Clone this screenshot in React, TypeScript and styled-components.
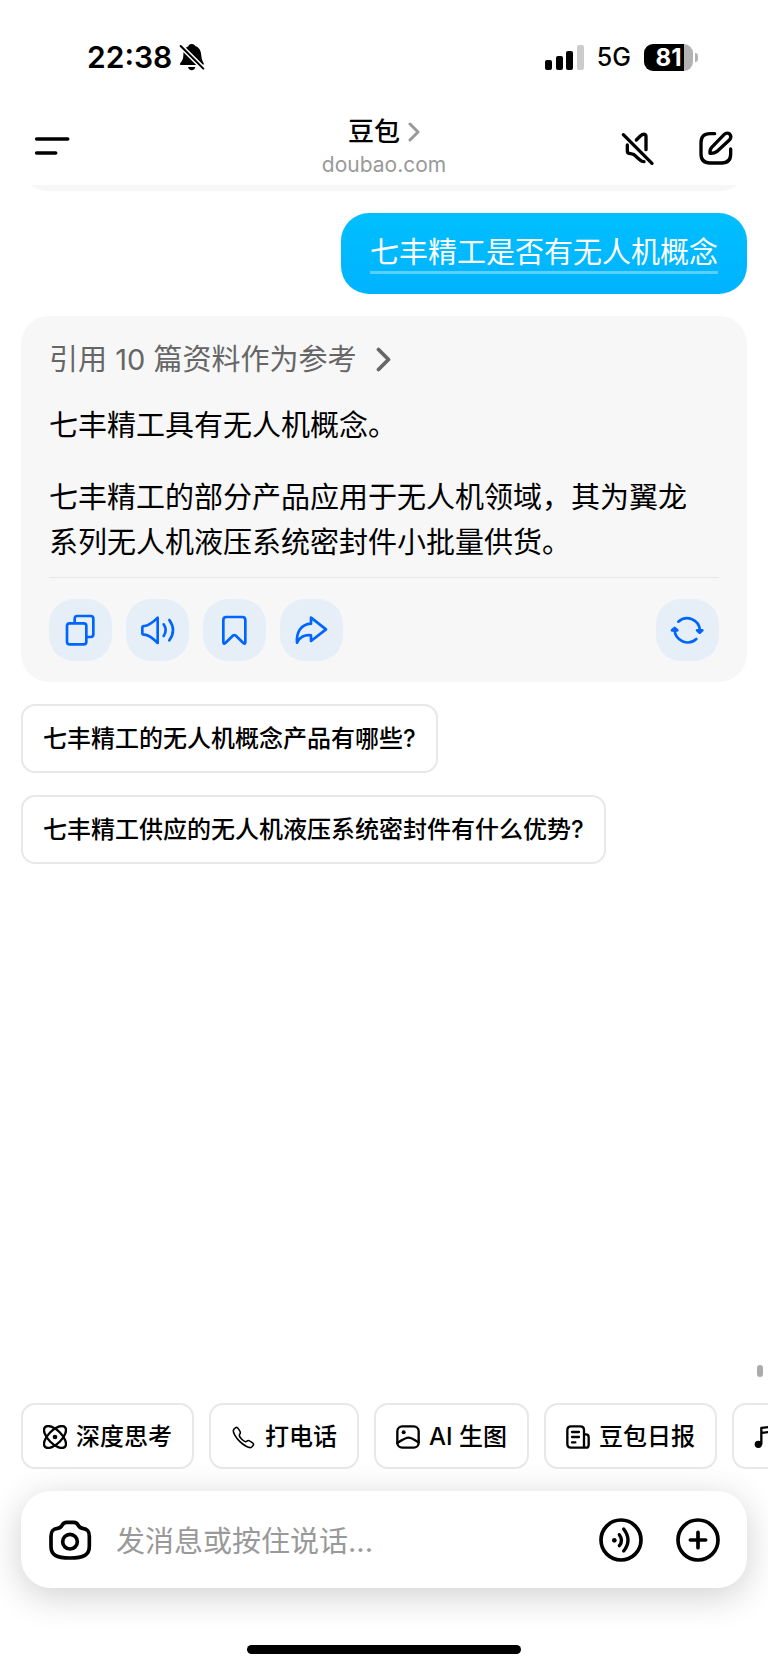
import React from "react";
import styled, { createGlobalStyle } from "styled-components";
import { IoCallOutline } from "react-icons/io5";

const GlobalStyle = createGlobalStyle`
  *, *::before, *::after { box-sizing: border-box; }
  body {
    margin: 0;
    background: #fff;
    color: #000;
    font-family: Inter, "Noto Sans CJK SC", sans-serif;
  }
  button, input { font: inherit; color: inherit; }
  button { margin: 0; padding: 0; border: 0; background: none; cursor: pointer; }
  p, h1 { margin: 0; }
  svg { display: block; flex: none; }
`;

const Screen = styled.div`
  display: flex;
  flex-direction: column;
  min-height: 100vh;
  overflow: hidden;
`;

const StatusBar = styled.div`
  display: flex;
  align-items: center;
  justify-content: space-between;
  height: 114px;
  padding: 0 70px 0 87px;
`;

const StatusGroup = styled.div<{ $gap: number }>`
  display: flex;
  align-items: center;
  gap: ${(p) => p.$gap}px;
`;

const Clock = styled.time`
  font-size: 30px;
  font-weight: 600;
  line-height: 36px;
`;

const Network = styled.span`
  font-size: 25px;
  font-weight: 500;
  line-height: 30px;
`;

const Battery = styled.div`
  display: flex;
  align-items: center;
  gap: 2px;
  &::after {
    content: "";
    width: 3px;
    height: 9px;
    border-radius: 0 4px 4px 0;
    background: #b3b3b3;
  }
`;

const BatteryLevel = styled.span`
  width: 49px;
  border-radius: 9px;
  background: linear-gradient(to right, #000 81%, #b3b3b3 81%);
  color: #fff;
  font-size: 24px;
  font-weight: 700;
  line-height: 27px;
  text-align: center;
`;

const NavBar = styled.header`
  display: grid;
  grid-template-columns: 1fr auto 1fr;
  align-items: center;
  height: 71px;
  padding: 0 32px 4px;
`;

const NavActions = styled.div`
  display: flex;
  justify-content: flex-end;
  gap: 38px;
`;

const TitleBlock = styled.div`
  display: flex;
  flex-direction: column;
  align-items: center;
`;

const Title = styled.h1`
  display: flex;
  align-items: center;
  gap: 8px;
  font-size: 26px;
  font-weight: 500;
  line-height: 34px;
`;

const Subtitle = styled.p`
  color: #999;
  font-size: 21px;
  line-height: 32px;
`;

const Conversation = styled.main`
  position: relative;
  display: flex;
  flex: 1;
  flex-direction: column;
  align-items: flex-start;
  gap: 22px;
  overflow: hidden;
  padding: 0 21px 22px;
`;

const EarlierReply = styled.div`
  align-self: stretch;
  height: 51px;
  margin-top: -45px;
  border-radius: 28px;
  background: #f7f7f7;
`;

const UserBubble = styled.div`
  align-self: flex-end;
  padding: 21px 29px 20px;
  border-radius: 28px;
  background: linear-gradient(#00bfff, #00b3ff);
`;

const QueryLink = styled.a`
  display: block;
  border-bottom: 3px solid rgba(255, 255, 255, 0.35);
  color: #fff;
  font-size: 29px;
  font-weight: 400;
  line-height: 37px;
  text-decoration: none;
`;

const ReplyCard = styled.article`
  align-self: stretch;
  padding: 21px 28px;
  border-radius: 28px;
  background: #f7f7f7;
  font-size: 29px;
  line-height: 45px;
`;

const SourcesButton = styled.button`
  display: flex;
  align-items: center;
  gap: 20px;
  color: #666;
`;

const Paragraph = styled.p<{ $gap: number }>`
  margin-top: ${(p) => p.$gap}px;
  padding-right: 12px;
`;

const ReplyToolbar = styled.div`
  display: flex;
  gap: 14px;
  margin-top: 12px;
  padding-top: 21px;
  border-top: 1px solid #e6e6e6;
`;

const ToolButton = styled.button<{ $end?: boolean }>`
  display: grid;
  place-items: center;
  width: 63px;
  height: 62px;
  margin-left: ${(p) => (p.$end ? "auto" : "0")};
  border-radius: 25px;
  background: #e6eff8;
  color: #0065fd;
`;

const Suggestion = styled.button`
  height: 69px;
  padding: 0 20px;
  border: 2px solid #e8e8e8;
  border-radius: 14px;
  font-size: 24px;
  font-weight: 500;
  line-height: 36px;
`;

const ScrollThumb = styled.div`
  position: absolute;
  right: 5px;
  bottom: 26px;
  width: 6px;
  height: 12px;
  border-radius: 3px;
  background: #aaa;
`;

const Shortcuts = styled.nav`
  display: flex;
  gap: 15px;
  overflow: hidden;
  padding: 0 0 22px 21px;
`;

const Shortcut = styled.button`
  display: flex;
  flex: none;
  align-items: center;
  gap: 9px;
  height: 66px;
  padding: 2px 20px 0;
  border: 2px solid #e8e8e8;
  border-radius: 14px;
  font-size: 24px;
  font-weight: 500;
  line-height: 36px;
`;

const Composer = styled.form`
  display: flex;
  align-items: center;
  gap: 33px;
  height: 97px;
  margin: 0 21px;
  padding: 0 27px;
  border-radius: 30px;
  background: #fff;
  box-shadow: 0 8px 36px rgba(0, 0, 0, 0.19);
`;

const MessageInput = styled.input`
  flex: 1;
  min-width: 0;
  margin-left: -9px;
  padding: 5px 0 0;
  border: 0;
  outline: 0;
  background: none;
  font-size: 29px;
  line-height: 40px;
  &::placeholder { color: #999; opacity: 1; }
`;

const HomeIndicator = styled.div`
  align-self: center;
  width: 274px;
  height: 9px;
  margin: 57px 0 15px;
  border-radius: 5px;
  background: #000;
`;

type IconProps = {
  width: number;
  height: number;
  stroke?: number;
  children: React.ReactNode;
};

/* Icons are drawn on a grid three times finer than their display size. */
const Icon = ({ width, height, stroke = 10, children }: IconProps) => (
  <svg
    width={width}
    height={height}
    viewBox={`0 0 ${width * 3} ${height * 3}`}
    fill="none"
    stroke="currentColor"
    strokeWidth={stroke}
    strokeLinecap="round"
    strokeLinejoin="round"
    aria-hidden="true"
  >
    {children}
  </svg>
);

const BellOff = () => (
  <Icon width={26} height={28} stroke={6}>
    <g fill="currentColor" stroke="none">
      <path d="M38 3C46 3 48 8 50 10C62 14 66 25 67 38C68 50 71 54 74 60Q76 66 71 66H7Q1 66 4 60C10 52 13 48 13 36C13 22 18 14 28 10C29 7 31 3 38 3Z" />
      <path d="M27 72H49Q46 82 38 82T27 72Z" />
    </g>
    <path d="M2 6L78 82" stroke="#fff" strokeWidth={15} />
    <path d="M5 9L73 77" />
  </Icon>
);

const Signal = () => (
  <svg width="39" height="25" viewBox="0 0 39 25" fill="currentColor" aria-hidden="true">
    <rect x="0" y="15" width="7" height="10" rx="2" />
    <rect x="11" y="11" width="7" height="14" rx="2" />
    <rect x="21" y="6" width="7" height="19" rx="2" />
    <rect x="32" y="0" width="7" height="25" rx="2" fill="#ccc" />
  </svg>
);

const MenuIcon = () => (
  <Icon width={40} height={40} stroke={11}>
    <path d="M14 39H107M14 81H71" />
  </Icon>
);

const MuteIcon = () => (
  <Icon width={40} height={40}>
    <path d="M16 20L102 106" />
    <path d="M55 36L67 24Q74 18 80 19Q84 20 84 26V65" />
    <path d="M28 51V70Q28 77 38 77Q48 78 55 86L66 96Q71 101 78 101" />
  </Icon>
);

const ComposeIcon = () => (
  <Icon width={40} height={40}>
    <path d="M56 17H42Q15 17 15 44V78Q15 105 42 105H77Q104 105 104 78V63" />
    <path d="M42 76Q41 64 47 58L84 20Q92 12 101 18Q108 26 101 35L62 71Q54 77 42 76Z" />
  </Icon>
);

const Chevron = ({ size, color }: { size: number; color: string }) => (
  <svg width={size * 0.6} height={size} viewBox="0 0 12 20" fill="none" stroke={color} strokeWidth="3" strokeLinecap="round" strokeLinejoin="round" aria-hidden="true">
    <path d="M2 2L10 10L2 18" />
  </svg>
);

const CopyIcon = () => (
  <Icon width={63} height={63} stroke={8}>
    <rect x="54" y="73" width="58" height="63" rx="8" />
    <path d="M77 70V59Q77 51 85 51H125Q133 51 133 59V106Q133 114 125 114H114" />
  </Icon>
);

const SpeakIcon = () => (
  <Icon width={63} height={63} stroke={8}>
    <path d="M49 86Q49 81 54 81H56C71 79 82 69 95 56V132C82 119 71 109 56 107H54Q49 107 49 102Z" />
    <path d="M113 76Q125 94 113 111M130 63Q152 94 130 124" />
  </Icon>
);

const BookmarkIcon = () => (
  <Icon width={63} height={63} stroke={8}>
    <path d="M61 63Q61 54 70 54H118Q127 54 127 63V129Q127 137 121 132L97 109Q94 107 91 109L67 132Q61 137 61 129Z" />
  </Icon>
);

const ShareIcon = () => (
  <Icon width={63} height={63} stroke={8}>
    <path d="M93 56L138 91L93 126V109C75 106 58 114 51 131C49 100 62 76 93 74Z" />
  </Icon>
);

const RefreshIcon = () => (
  <Icon width={63} height={63} stroke={8}>
    <path d="M67 68A39 39 0 0 1 132 95M56 91A39 39 0 0 0 121 120" />
    <path d="M123 94H139L131 101ZM48 94H64L56 87Z" fill="currentColor" />
  </Icon>
);

const AtomIcon = () => (
  <Icon width={24} height={24} stroke={7}>
    <ellipse cx="36" cy="36" rx="42" ry="20" transform="rotate(45 36 36)" />
    <ellipse cx="36" cy="36" rx="42" ry="20" transform="rotate(-45 36 36)" />
    <circle cx="36" cy="36" r="7" fill="currentColor" stroke="none" />
  </Icon>
);

const PictureIcon = () => (
  <Icon width={24} height={24} stroke={7}>
    <rect x="4" y="4" width="64" height="64" rx="15" />
    <path d="M4 54C22 42 28 38 38 38S56 46 68 52" />
    <circle cx="23" cy="22" r="6" fill="currentColor" stroke="none" />
  </Icon>
);

const NewsIcon = () => (
  <Icon width={24} height={24} stroke={7}>
    <path d="M54 68H15Q4 68 4 57V15Q4 4 15 4H43Q54 4 54 15ZM54 28H60Q68 28 68 37V59Q68 68 60 68H54" />
    <path d="M18 21H39M18 36H39M18 52H28" />
  </Icon>
);

const MusicIcon = () => (
  <Icon width={24} height={24} stroke={7}>
    <path d="M22 57V9L66 3V48M22 24L66 18" />
    <circle cx="13" cy="58" r="11" fill="currentColor" stroke="none" />
    <circle cx="57" cy="50" r="11" fill="currentColor" stroke="none" />
  </Icon>
);

const CameraIcon = () => (
  <Icon width={44} height={42} stroke={11}>
    <path d="M56 10H77C85 10 88 13 91 19C94 25 97 27 104 28C119 30 124 37 124 52V82C124 108 108 117 66 117C24 117 9 108 9 82V52C9 37 14 30 29 28C36 27 39 25 42 19C45 13 48 10 56 10Z" />
    <circle cx="66" cy="68" r="22" />
  </Icon>
);

const VoiceIcon = () => (
  <Icon width={44} height={44} stroke={10}>
    <circle cx="66" cy="66" r="60" stroke="currentColor" strokeWidth={11} />
    <circle cx="46" cy="67" r="7" fill="currentColor" stroke="none" />
    <path d="M61 50Q74 67 61 83M74 33Q100 67 74 99" />
  </Icon>
);

const PlusIcon = () => (
  <Icon width={44} height={44} stroke={11}>
    <circle cx="66" cy="66" r="60" />
    <path d="M43 66H89M66 43V89" />
  </Icon>
);

const replyTools = [
  { label: "复制", icon: <CopyIcon /> },
  { label: "朗读", icon: <SpeakIcon /> },
  { label: "收藏", icon: <BookmarkIcon /> },
  { label: "分享", icon: <ShareIcon /> },
];

const suggestions = [
  "七丰精工的无人机概念产品有哪些?",
  "七丰精工供应的无人机液压系统密封件有什么优势?",
];

const shortcuts = [
  { label: "深度思考", icon: <AtomIcon /> },
  { label: "打电话", icon: <IoCallOutline size={25} stroke="currentColor" strokeWidth={8} /> },
  { label: "AI 生图", icon: <PictureIcon /> },
  { label: "豆包日报", icon: <NewsIcon /> },
];

export default function App() {
  return (
    <Screen>
      <GlobalStyle />
      <StatusBar>
        <StatusGroup $gap={7}>
          <Clock>22:38</Clock>
          <BellOff />
        </StatusGroup>
        <StatusGroup $gap={13}>
          <Signal />
          <Network>5G</Network>
          <Battery>
            <BatteryLevel>81</BatteryLevel>
          </Battery>
        </StatusGroup>
      </StatusBar>

      <NavBar>
        <div>
          <button type="button" aria-label="菜单"><MenuIcon /></button>
        </div>
        <TitleBlock>
          <Title>豆包 <Chevron size={20} color="#999" /></Title>
          <Subtitle>doubao.com</Subtitle>
        </TitleBlock>
        <NavActions>
          <button type="button" aria-label="静音"><MuteIcon /></button>
          <button type="button" aria-label="新对话"><ComposeIcon /></button>
        </NavActions>
      </NavBar>

      <Conversation>
        <EarlierReply />
        <UserBubble>
          <QueryLink href="#">七丰精工是否有无人机概念</QueryLink>
        </UserBubble>
        <ReplyCard>
          <SourcesButton type="button">
            引用 10 篇资料作为参考 <Chevron size={25} color="#666" />
          </SourcesButton>
          <Paragraph $gap={21}>七丰精工具有无人机概念。</Paragraph>
          <Paragraph $gap={27}>
            七丰精工的部分产品应用于无人机领域，其为翼龙系列无人机液压系统密封件小批量供货。
          </Paragraph>
          <ReplyToolbar>
            {replyTools.map((tool) => (
              <ToolButton key={tool.label} type="button" aria-label={tool.label}>
                {tool.icon}
              </ToolButton>
            ))}
            <ToolButton $end type="button" aria-label="重新生成"><RefreshIcon /></ToolButton>
          </ReplyToolbar>
        </ReplyCard>
        {suggestions.map((text) => (
          <Suggestion key={text} type="button">{text}</Suggestion>
        ))}
        <ScrollThumb />
      </Conversation>

      <Shortcuts>
        {shortcuts.map((item) => (
          <Shortcut key={item.label} type="button">
            {item.icon}
            {item.label}
          </Shortcut>
        ))}
        <Shortcut type="button" aria-label="音乐"><MusicIcon /></Shortcut>
      </Shortcuts>

      <Composer onSubmit={(event) => event.preventDefault()}>
        <button type="button" aria-label="拍照"><CameraIcon /></button>
        <MessageInput aria-label="消息" placeholder="发消息或按住说话..." />
        <button type="button" aria-label="语音通话"><VoiceIcon /></button>
        <button type="button" aria-label="更多"><PlusIcon /></button>
      </Composer>
      <HomeIndicator />
    </Screen>
  );
}
